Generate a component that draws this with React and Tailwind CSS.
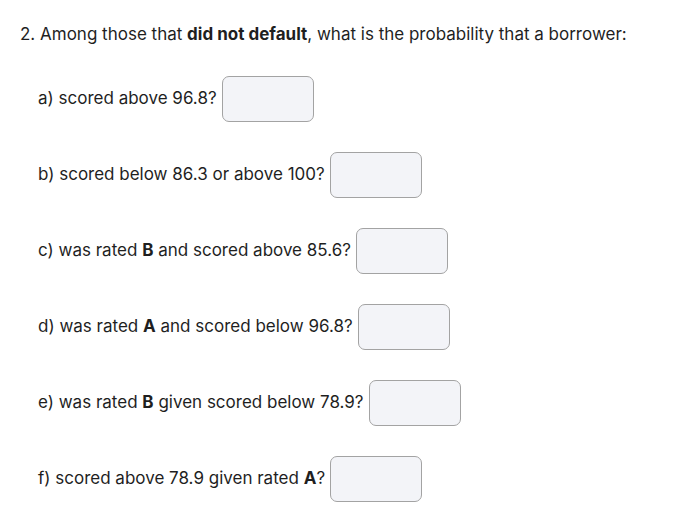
import React from 'react';

const items = [
  { label: <>a) scored above 96.8?</> },
  { label: <>b) scored below 86.3 or above 100?</> },
  { label: <>c) was rated <b>B</b> and scored above 85.6?</> },
  { label: <>d) was rated <b>A</b> and scored below 96.8?</> },
  { label: <>e) was rated <b>B</b> given scored below 78.9?</> },
  { label: <>f) scored above 78.9 given rated <b>A</b>?</> },
];

export default function App() {
  return (
    <div
      className="w-[694px] h-[526px] bg-white text-[#1f1f1f] pt-[22px]"
      style={{ fontFamily: 'Inter, "Noto Sans", sans-serif' }}
    >
      <p className="pl-[20px] text-[17px] leading-[24px]">
        2. Among those that <b>did not default</b>, what is the probability that a borrower:
      </p>
      <div className="pl-[38px] mt-[30px] flex flex-col gap-[30px]">
        {items.map((it, i) => (
          <div key={i} className="flex items-center h-[46px] gap-[5px] text-[17px]">
            <span>{it.label}</span>
            <input
              type="text"
              className="w-[92px] h-[46px] rounded-[7px] border border-[#a3a3a3] bg-[#f3f4f8] outline-none"
            />
          </div>
        ))}
      </div>
    </div>
  );
}
